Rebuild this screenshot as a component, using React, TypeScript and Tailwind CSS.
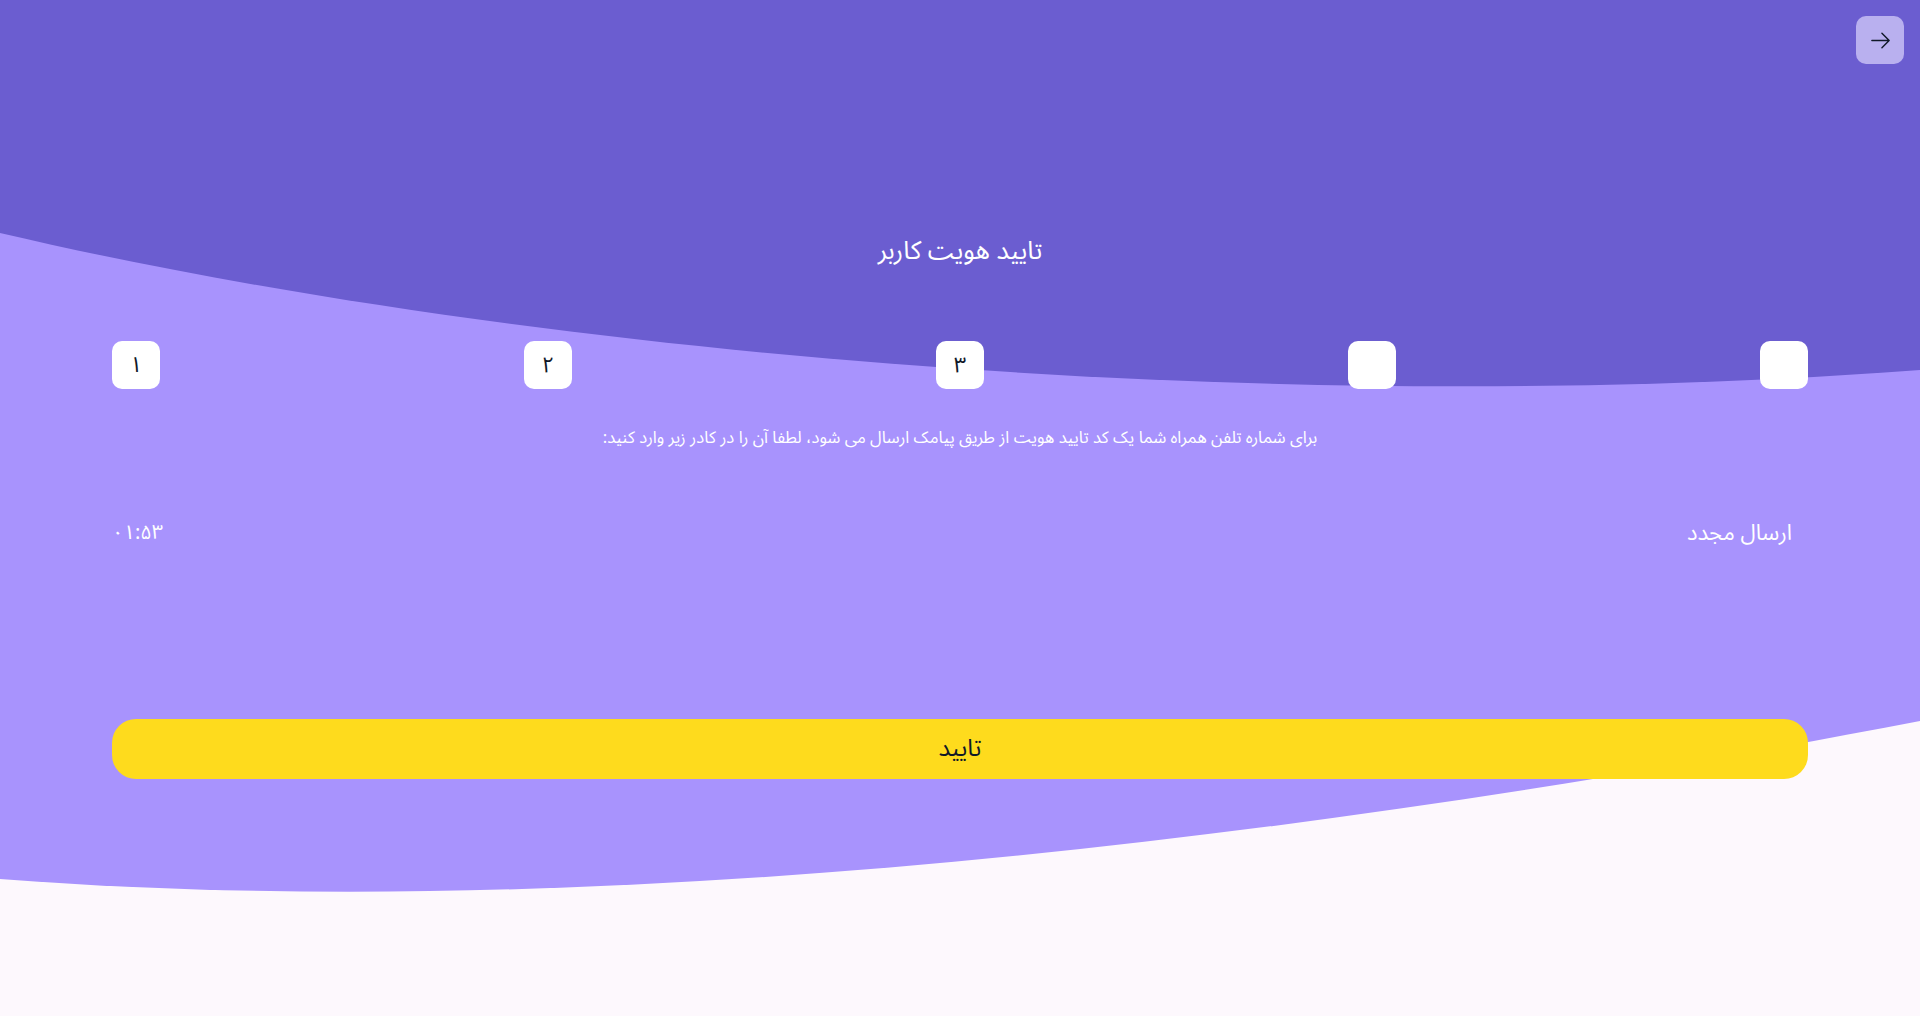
import React, { useState } from 'react';

const FONT = { fontFamily: '"Noto Sans Arabic", "DejaVu Sans", sans-serif' };

function BackArrow() {
  return (
    <svg width="23" height="23" viewBox="0 0 24 24" fill="none" stroke="currentColor" strokeWidth={1.5} strokeLinecap="round" strokeLinejoin="round">
      <path d="M13.5 4.5 21 12m0 0-7.5 7.5M21 12H3" />
    </svg>
  );
}

export default function App() {
  const [code] = useState(['۱', '۲', '۳', '', '']);

  return (
    <div className="relative min-h-screen w-full overflow-hidden bg-[#fdf8fd]" style={FONT}>
      {/* background waves */}
      <svg className="absolute inset-0 h-full w-full" viewBox="0 0 1920 1016" preserveAspectRatio="none">
        <path d="M0 0 H1920 V1016 H0 Z" fill="#fdf8fd" />
        <path d="M0 0 H1920 V721 C1300 840, 600 925, 0 879 Z" fill="#a893fd" />
        <path d="M0 0 H1920 V370 C1250 420, 500 350, 0 233 Z" fill="#6b5dd0" />
      </svg>

      <div className="relative flex flex-col" dir="rtl">
        <div className="flex justify-start pt-4 pr-4">
          <button className="flex h-12 w-12 items-center justify-center rounded-[10px] bg-[#b9b0ef] text-gray-900">
            <BackArrow />
          </button>
        </div>

        <h1 className="mt-[169px] text-center text-[25.5px] leading-9 text-white">تایید هویت کاربر</h1>

        <div className="mt-[72px] flex justify-between px-[112px]" dir="ltr">
          {code.map((d, i) => (
            <div key={i} className="flex h-12 w-12 items-center justify-center rounded-[10px] bg-white text-[22px] text-gray-900">
              {d}
            </div>
          ))}
        </div>

        <p className="mt-[37px] text-center text-[16.7px] leading-6 text-white">
          برای شماره تلفن همراه شما یک کد تایید هویت از طریق پیامک ارسال می شود، لطفا آن را در کادر زیر وارد کنید:
        </p>

        <div className="mt-[68px] flex items-center justify-between px-[112px]">
          <button className="pr-4 text-[22px] leading-[30px] text-white">ارسال مجدد</button>
          <span className="text-xl leading-[30px] text-white">۰۱:۵۳</span>
        </div>

        <div className="mt-[171px] px-[112px]">
          <button className="flex h-[60px] w-full items-center justify-center rounded-3xl bg-[#fedb1d] text-2xl text-gray-900">
            تایید
          </button>
        </div>
      </div>
    </div>
  );
}
